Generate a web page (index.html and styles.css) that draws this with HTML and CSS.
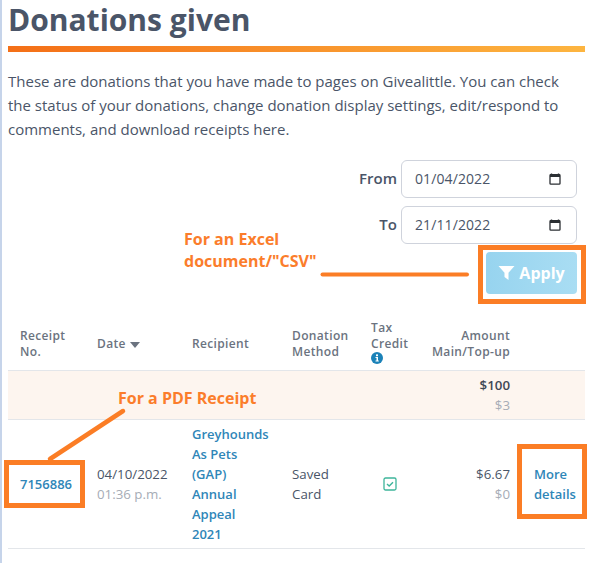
FILE: index.html
```html
<!DOCTYPE html>
<html lang="en">
<head>
    <meta charset="UTF-8">
    <title>Donations given</title>
    <link rel="stylesheet" href="styles.css">
</head>
<body>

<div class="container">
    <h1 class="title">Donations given</h1>
    <div class="title-rule"></div>
    <p class="intro">These are donations that you have made to pages on Givealittle. You can check the status of your donations, change donation display settings, edit/respond to comments, and download receipts here.</p>

    <div class="filters">
        <div class="filter-row">
            <label class="filter-label">From</label>
            <div class="date-box">
                <span>01/04/2022</span>
                <svg class="cal-icon" viewBox="0 0 12 12"><path d="M2.5 .5v1.5M9.5 .5v1.5" stroke="#2b2f33" stroke-width="1.4"/><rect x="1" y="1.6" width="10" height="9.6" rx=".8" fill="none" stroke="#2b2f33" stroke-width="1.3"/><rect x="1" y="1.6" width="10" height="2.4" fill="#2b2f33"/></svg>
            </div>
        </div>
        <div class="filter-row">
            <label class="filter-label">To</label>
            <div class="date-box">
                <span>21/11/2022</span>
                <svg class="cal-icon" viewBox="0 0 12 12"><path d="M2.5 .5v1.5M9.5 .5v1.5" stroke="#2b2f33" stroke-width="1.4"/><rect x="1" y="1.6" width="10" height="9.6" rx=".8" fill="none" stroke="#2b2f33" stroke-width="1.3"/><rect x="1" y="1.6" width="10" height="2.4" fill="#2b2f33"/></svg>
            </div>
        </div>
        <button class="apply-btn" type="button">
            <svg class="funnel" viewBox="0 0 16 14"><path d="M0 0h16L10 6.800V14L6 11V6.800z" fill="#fff"/></svg>
            Apply
        </button>
    </div>

    <table class="donations">
        <colgroup>
            <col class="c-receipt"><col class="c-date"><col class="c-recipient"><col class="c-method"><col class="c-tax"><col class="c-amount"><col>
        </colgroup>
        <thead>
            <tr>
                <th>Receipt No.</th>
                <th>Date <span class="sort-caret"></span></th>
                <th>Recipient</th>
                <th>Donation Method</th>
                <th>Tax Credit<br>
                    <svg class="info-icon" viewBox="0 0 12 12"><circle cx="6" cy="6" r="6" fill="#1b82b8"/><rect x="5" y="2.400" width="2" height="1.800" fill="#fff"/><path d="M4.500 5h2.500v3.500h.8v1H4.500v-1h1V6h-1z" fill="#fff"/></svg>
                </th>
                <th class="right no-wrap">Amount<br>Main/Top-up</th>
                <th></th>
            </tr>
        </thead>
        <tbody>
            <tr class="total-row">
                <td colspan="5"></td>
                <td class="right"><strong class="total">$100</strong><br><span class="muted">$3</span></td>
                <td></td>
            </tr>
            <tr>
                <td><a class="row-link" href="#">7156886</a></td>
                <td>04/10/2022<br><span class="muted">01:36 p.m.</span></td>
                <td><a class="row-link" href="#">Greyhounds As Pets (GAP) Annual Appeal 2021</a></td>
                <td>Saved Card</td>
                <td>
                    <svg class="check-icon" viewBox="0 0 14 14"><rect x="1" y="1" width="12" height="12" rx="1.500" fill="none" stroke="#3eb59b" stroke-width="1.300"/><path d="M4 7l2.200 2L10 5.200" fill="none" stroke="#3eb59b" stroke-width="1.400"/></svg>
                </td>
                <td class="right">$6.67<br><span class="muted">$0</span></td>
                <td><a class="row-link" href="#">More details</a></td>
            </tr>
        </tbody>
    </table>
</div>

<!-- notes drawn on top of the page -->
<div class="note note-excel">For an Excel<br>document/"CSV"</div>
<div class="note note-pdf">For a PDF Receipt</div>
<div class="mark mark-apply"></div>
<div class="mark mark-receipt"></div>
<div class="mark mark-more"></div>
<svg class="arrows" width="608" height="563">
    <path d="M322.500 274.500H467" stroke="#fb7d25" stroke-width="4" stroke-linecap="round"/>
    <path d="M50 459L123 411" stroke="#fb7d25" stroke-width="4.500" stroke-linecap="round"/>
</svg>

</body>
</html>
```

FILE: styles.css
```css
html, body {
    margin: 0;
    padding: 0;
    height: 563px;
    overflow: hidden;
}

body {
    font-family: "Open Sans", sans-serif;
    color: #4a5568;
    background-color: #fff;
    position: relative;
}

.container {
    width: 577px;
    height: 563px;
    padding-left: 6px;
    border-left: 2px solid #c6d4ea;
}

.title {
    margin: 0;
    font-size: 30px;
    line-height: 40px;
    font-weight: 700;
    color: #4a5568;
}

.title-rule {
    height: 6px;
    margin-top: 6px;
    background: linear-gradient(to right, #f46f17, #fdb540);
}

.intro {
    margin: 17px 0 0;
    font-size: 15px;
    line-height: 24px;
}

.filters {
    margin-top: 19px;
    display: flex;
    flex-direction: column;
    align-items: flex-end;
    gap: 8px;
    padding-right: 8px;
}

.filter-row {
    display: flex;
    align-items: center;
    gap: 4px;
}

.filter-label {
    padding-bottom: 2px;
    font-size: 15px;
    font-weight: 600;
}

.date-box {
    width: 176px;
    height: 38px;
    box-sizing: border-box;
    padding: 0 15px 1px 13px;
    border: 1px solid #cfd3dc;
    border-radius: 6px;
    display: flex;
    align-items: center;
    justify-content: space-between;
    font-size: 14px;
    letter-spacing: .1px;
}

.cal-icon {
    width: 12px;
    height: 12px;
}

.apply-btn {
    width: 91px;
    height: 42px;
    border: none;
    border-radius: 4px;
    background: linear-gradient(to right, #97d4ef, #a9ddf3);
    color: #fff;
    font-family: inherit;
    font-size: 16px;
    font-weight: 700;
    display: flex;
    align-items: center;
    justify-content: center;
    gap: 4px;
}

.funnel {
    width: 17px;
    height: 14px;
}

.donations {
    width: 100%;
    margin-top: 24px;
    border-collapse: collapse;
    table-layout: fixed;
    font-size: 13.3px;
    line-height: 20px;
}

.c-receipt { width: 77px; }
.c-date { width: 95px; }
.c-recipient { width: 100px; }
.c-method { width: 79px; }
.c-tax { width: 61px; }
.c-amount { width: 102px; }

.donations th {
    padding: 0 12px;
    height: 52px;
    font-size: 12px;
    line-height: 16px;
    font-weight: 600;
    letter-spacing: .35px;
    text-align: left;
    color: #6b7380;
    vertical-align: middle;
    border-bottom: 1px solid #e3e6ea;
}

.donations td {
    padding: 4px 12px;
    vertical-align: middle;
    border-bottom: 1px solid #e3e6ea;
}

.donations .right {
    text-align: right;
}

.donations .no-wrap {
    padding-left: 0;
    white-space: nowrap;
}

.total-row td {
    background-color: #fdf5ef;
}

.total {
    font-weight: 600;
    color: #3f4855;
}

.muted {
    color: #a6acb6;
}

.sort-caret {
    display: inline-block;
    width: 0;
    height: 0;
    margin-left: 1px;
    border-left: 5px solid transparent;
    border-right: 5px solid transparent;
    border-top: 6px solid #6b7380;
    vertical-align: middle;
}

.info-icon {
    width: 12px;
    height: 12px;
    display: block;
    margin-bottom: 4px;
}

.check-icon {
    width: 14px;
    height: 14px;
    display: block;
    margin-left: 12px;
}

.row-link {
    font-size: 13px;
    font-weight: 600;
    color: #2f86b8;
    text-decoration: none;
}

.note {
    position: absolute;
    font-size: 16px;
    line-height: 22px;
    font-weight: 700;
    color: #fb7d2b;
}

.note-excel {
    left: 184px;
    top: 228px;
}

.note-pdf {
    left: 118px;
    top: 387px;
}

.mark {
    position: absolute;
    box-sizing: border-box;
    border: 5px solid #fb7d25;
}

.mark-apply {
    left: 478px;
    top: 245px;
    width: 108px;
    height: 59px;
}

.mark-receipt {
    left: 4px;
    top: 460px;
    width: 81px;
    height: 48px;
}

.mark-more {
    left: 517px;
    top: 444px;
    width: 70px;
    height: 75px;
}

.arrows {
    position: absolute;
    left: 0;
    top: 0;
}
```
